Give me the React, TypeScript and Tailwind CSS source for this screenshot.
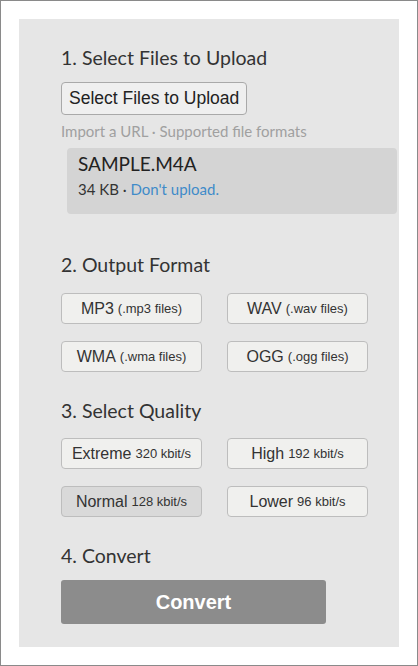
import React from 'react';

const formats = [
    { name: 'MP3', ext: '(.mp3 files)' },
    { name: 'WAV', ext: '(.wav files)' },
    { name: 'WMA', ext: '(.wma files)' },
    { name: 'OGG', ext: '(.ogg files)' },
];

const qualities = [
    { name: 'Extreme', rate: '320 kbit/s', active: false },
    { name: 'High', rate: '192 kbit/s', active: false },
    { name: 'Normal', rate: '128 kbit/s', active: true },
    { name: 'Lower', rate: '96 kbit/s', active: false },
];

const lato = "font-['Lato','Noto_Sans',sans-serif]";
const arial = "font-['Liberation_Sans',Arial,sans-serif]";

function Heading({ children }: { children: React.ReactNode }) {
    return <h2 className={`${lato} text-[19.5px] leading-[24px] text-[#333]`}>{children}</h2>;
}

function OptionButton({ main, sub, active }: { main: string; sub: string; active?: boolean }) {
    return (
        <button
            className={`${arial} h-[31px] w-[141px] rounded-[4px] border border-[#bdbdbd] text-[#333] flex items-center justify-center gap-[4px] ${
                active ? 'bg-[#d9d9d9]' : 'bg-[#f0f0ee]'
            }`}
        >
            <span className="text-[16px]">{main}</span>
            <span className="text-[13px]">{sub}</span>
        </button>
    );
}

export default function App() {
    return (
        <div className="w-[418px] h-[666px] border border-[#8a8a8a] bg-white p-[18px]">
            <div className="h-full bg-[#e6e6e6] pl-[42px] pr-[2px] pt-[27px]">
                <Heading>1. Select Files to Upload</Heading>
                <button
                    className={`${arial} mt-[12px] h-[33px] px-[7px] rounded-[4px] border border-[#a9a9a9] bg-[#efefef] text-[17.5px] text-[#222]`}
                >
                    Select Files to Upload
                </button>
                <p className={`${lato} mt-[7px] text-[15px] leading-[18px] text-[#a0a0a0]`}>
                    Import a URL · Supported file formats
                </p>
                <div className={`${lato} mt-[8px] ml-[6px] h-[66px] rounded-[4px] bg-[#d4d4d4] pl-[11px] pt-[4px]`}>
                    <div className="text-[19px] leading-[24px] text-[#222]">SAMPLE.M4A</div>
                    <div className="mt-[4px] text-[15px] leading-[18px] text-[#333]">
                        34 KB · <span className="text-[#3f8bc9]">Don't upload.</span>
                    </div>
                </div>

                <div className="mt-[39px]">
                    <Heading>2. Output Format</Heading>
                </div>
                <div className="mt-[16px] grid grid-cols-[141px_141px] gap-x-[25px] gap-y-[17px]">
                    {formats.map((f) => (
                        <OptionButton key={f.name} main={f.name} sub={f.ext} />
                    ))}
                </div>

                <div className="mt-[27px]">
                    <Heading>3. Select Quality</Heading>
                </div>
                <div className="mt-[15px] grid grid-cols-[141px_141px] gap-x-[25px] gap-y-[17px]">
                    {qualities.map((q) => (
                        <OptionButton key={q.name} main={q.name} sub={q.rate} active={q.active} />
                    ))}
                </div>

                <div className="mt-[27px]">
                    <Heading>4. Convert</Heading>
                </div>
                <button
                    className={`${arial} mt-[12px] h-[44px] w-[265px] rounded-[3px] bg-[#8c8c8c] text-[20px] font-bold text-white`}
                >
                    Convert
                </button>
            </div>
        </div>
    );
}
